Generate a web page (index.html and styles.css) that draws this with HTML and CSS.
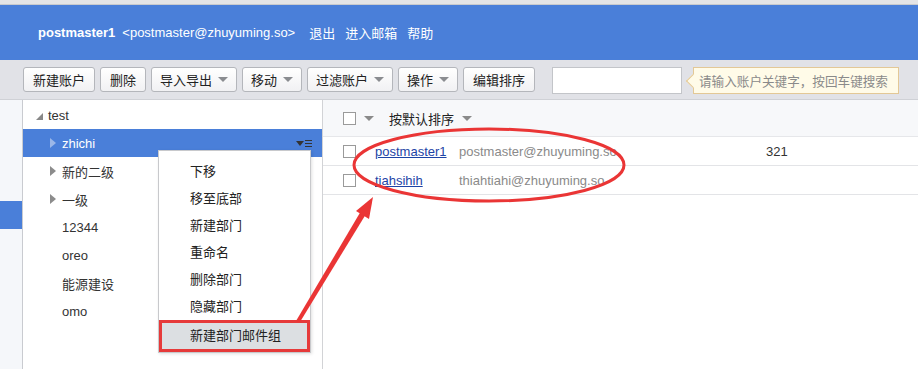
FILE: index.html
```html
<!DOCTYPE html>
<html lang="zh">
<head>
<meta charset="utf-8">
<title>账户管理</title>
<link rel="stylesheet" href="styles.css">
</head>
<body>
<div class="topstrip"></div>
<header class="header">
  <span class="user">postmaster1</span>
  <span class="mail">&lt;postmaster@zhuyuming.so&gt;</span>
  <a class="hlink">退出</a>
  <a class="hlink">进入邮箱</a>
  <a class="hlink">帮助</a>
</header>
<div class="toolbar">
  <button class="btn w72">新建账户</button>
  <button class="btn w46">删除</button>
  <button class="btn w86">导入导出<i class="caret"></i></button>
  <button class="btn w60">移动<i class="caret"></i></button>
  <button class="btn w86">过滤账户<i class="caret"></i></button>
  <button class="btn w60">操作<i class="caret"></i></button>
  <button class="btn w72">编辑排序</button>
  <input class="search" type="text">
  <div class="tip"><span class="tiptext">请输入账户关键字，按回车键搜索</span></div>
</div>
<div class="main">
  <div class="strip"><div class="strip-active"></div></div>
  <div class="tree">
    <div class="node root"><i class="tri-open"></i>test</div>
    <div class="node sel"><i class="tri"></i>zhichi<span class="menuicon"><i class="mcaret"></i><i class="mlines"></i></span></div>
    <div class="node"><i class="tri"></i>新的二级</div>
    <div class="node"><i class="tri"></i>一级</div>
    <div class="node leaf">12344</div>
    <div class="node leaf">oreo</div>
    <div class="node leaf">能源建设</div>
    <div class="node leaf">omo</div>
    <ul class="ctx">
      <li>下移</li>
      <li>移至底部</li>
      <li>新建部门</li>
      <li>重命名</li>
      <li>删除部门</li>
      <li>隐藏部门</li>
      <li class="hl">新建部门邮件组</li>
    </ul>
  </div>
  <div class="list">
    <div class="lhead">
      <span class="cb"></span><i class="caret dark"></i>
      <span class="sort">按默认排序</span><i class="caret dark"></i>
    </div>
    <div class="row">
      <span class="cb"></span>
      <a class="name">postmaster1</a>
      <span class="email">postmaster@zhuyuming.so</span>
      <span class="num">321</span>
    </div>
    <div class="row">
      <span class="cb"></span>
      <a class="name">tiahsihih</a>
      <span class="email">thiahtiahi@zhuyuming.so</span>
    </div>
  </div>
</div>
<svg class="annot" width="918" height="369" viewBox="0 0 918 369">
  <ellipse cx="489" cy="165" rx="135" ry="36" fill="none" stroke="#ea3535" stroke-width="3"/>
  <polygon fill="#ea3535" points="296,321 300,322 366,214 361,211"/>
  <polygon fill="#ea3535" points="373,197 369,219 356,211"/>
</svg>
</body>
</html>
```
FILE: styles.css
```css
* { box-sizing: border-box; }
html, body { margin: 0; padding: 0; }
body {
  width: 918px;
  height: 369px;
  overflow: hidden;
  background: #fff;
  font-family: "Liberation Sans", Arial, "Noto Sans CJK SC", sans-serif;
  font-size: 13px;
  color: #333;
  position: relative;
}
.topstrip {
  height: 5px;
  background: #e4e4e6;
  border-bottom: 1px solid #c9cacd;
}
.header {
  height: 55px;
  background: #4a7fd9;
  color: #fff;
  display: flex;
  align-items: center;
  padding-left: 38px;
  padding-bottom: 1px;
  white-space: nowrap;
}
.user { font-weight: bold; margin-right: 7px; }
.mail { margin-right: 14px; }
.hlink { margin-right: 10px; color: #fff; }
.toolbar {
  height: 40px;
  background: #e1e2e7;
  display: flex;
  align-items: flex-start;
  padding: 7px 0 0 23px;
  border-bottom: 1px solid #cfd1d6;
  white-space: nowrap;
}
.btn {
  height: 25px;
  margin-right: 5px;
  padding: 0;
  font: inherit;
  color: #222;
  background: linear-gradient(#ffffff, #f1f1f3);
  border: 1px solid #b4b6bb;
  border-radius: 3px;
  display: flex;
  align-items: center;
  justify-content: center;
  white-space: nowrap;
  flex: none;
}
.w72 { width: 72px; }
.w46 { width: 46px; }
.w86 { width: 86px; }
.w60 { width: 60px; }
.caret {
  display: inline-block;
  width: 0; height: 0;
  border-left: 5px solid transparent;
  border-right: 5px solid transparent;
  border-top: 5px solid #8a8c90;
  margin-left: 6px;
}
.search {
  width: 130px;
  height: 27px;
  margin-left: 12px;
  border: 1px solid #c3c5c9;
  background: #fff;
  padding: 0;
  flex: none;
}
.tip {
  position: relative;
  margin-left: 11px;
  width: 206px;
  min-width: 0;
  max-width: 206px;
  height: 27px;
  padding-left: 5px;
  background: #fffbe8;
  border: 1px solid #e3c896;
  color: #8a8a8a;
  flex: none;
  display: flex;
  align-items: center;
}
.tiptext {
  font-family: "Noto Sans CJK SC", sans-serif;
  font-size: 12.6px;
  white-space: nowrap;
}
.tip::before {
  content: "";
  position: absolute;
  left: -6px; top: 8px;
  width: 9px; height: 9px;
  background: #fffbe8;
  border-left: 1px solid #e3c896;
  border-bottom: 1px solid #e3c896;
  transform: rotate(45deg);
}
.main {
  display: flex;
  height: 269px;
}
.strip {
  width: 23px;
  background: #f5f7fa;
  border-right: 1px solid #c9cbd0;
  padding-top: 101px;
}
.strip-active { height: 28px; background: #4a7fd9; }
.tree {
  position: relative;
  width: 300px;
  border-right: 1px solid #d2d3d6;
  padding-top: 1px;
}
.node {
  height: 28px;
  display: flex;
  align-items: center;
  padding-left: 27px;
  color: #333;
}
.node.root { padding-left: 13px; }
.node.leaf { padding-left: 39px; }
.tri-open {
  width: 0; height: 0;
  border-left: 7px solid transparent;
  border-bottom: 7px solid #888;
  margin-right: 5px;
  margin-top: 2px;
}
.tri {
  width: 0; height: 0;
  border-top: 5px solid transparent;
  border-bottom: 5px solid transparent;
  border-left: 6px solid #8c8c8c;
  margin-right: 6px;
}
.node.sel { background: #4a7fd9; color: #fff; }
.node.sel .tri { border-left-color: #9bb7e8; }
.menuicon {
  margin-left: auto;
  margin-right: 10px;
  display: flex;
  align-items: center;
}
.mcaret {
  width: 0; height: 0;
  border-left: 4px solid transparent;
  border-right: 4px solid transparent;
  border-top: 5px solid #333;
}
.mlines {
  width: 7px; height: 7px;
  margin-left: 1px;
  background: linear-gradient(#333 0 1px, transparent 1px 3px, #333 3px 4px, transparent 4px 6px, #333 6px 7px);
}
.ctx {
  position: absolute;
  left: 135px;
  top: 50px;
  width: 153px;
  margin: 0;
  padding: 7px 0 0;
  list-style: none;
  background: #fff;
  border: 1px solid #c8c9cc;
  box-shadow: 1px 1px 3px rgba(0,0,0,0.12);
}
.ctx li {
  height: 27px;
  line-height: 27px;
  padding-left: 31px;
  color: #222;
}
.ctx li.hl {
  height: 32px;
  line-height: 26px;
  padding-left: 28px;
  background: #dcdfe2;
  border: 3px solid #e63a3a;
}
.list { flex: 1; }
.lhead {
  height: 37px;
  background: #f7f8fa;
  border-bottom: 1px solid #e6e7ea;
  display: flex;
  align-items: center;
  padding-left: 20px;
}
.cb {
  width: 13px; height: 13px;
  border: 1px solid #9a9a9a;
  background: #fff;
  display: inline-block;
}
.caret.dark { border-top-color: #8a8a8a; margin-left: 8px; }
.sort { margin-left: 15px; color: #222; }
.row {
  height: 29px;
  border-bottom: 1px solid #e3e4e7;
  display: flex;
  align-items: center;
  padding-left: 20px;
}
.name {
  margin-left: 19px;
  width: 84px;
  color: #1d44a6;
  text-decoration: underline;
}
.email { color: #8a8a8a; width: 307px; }
.num { color: #333; }
.annot {
  position: absolute;
  left: 0; top: 0;
  pointer-events: none;
}
```
